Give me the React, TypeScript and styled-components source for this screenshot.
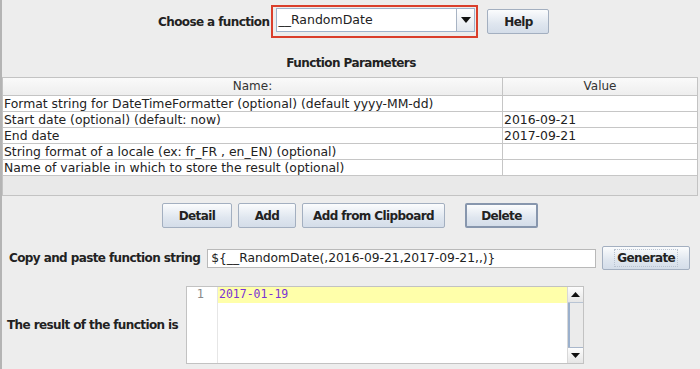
import React from 'react';
import styled, {createGlobalStyle} from 'styled-components';

const GlobalStyle = createGlobalStyle`
    html, body {
        margin: 0;
        padding: 0;
        background: #ededed;
    }
    * {
        box-sizing: border-box;
    }
`;

const params = [
    {name: "Format string for DateTimeFormatter (optional) (default yyyy-MM-dd)", value: ""},
    {name: "Start date (optional) (default: now)", value: "2016-09-21"},
    {name: "End date", value: "2017-09-21"},
    {name: "String format of a locale (ex: fr_FR , en_EN) (optional)", value: ""},
    {name: "Name of variable in which to store the result (optional)", value: ""},
];

export default function App() {
    return (
        <>
            <GlobalStyle/>
            <Window>
                <ChooseRow>
                    <BoldLabel>Choose a function</BoldLabel>
                    <FocusRing>
                        <Combo>
                            <ComboText>__RandomDate</ComboText>
                            <ComboArrow>
                                <svg width="10" height="6" viewBox="0 0 10 6"><path d="M0 0 L10 0 L5 6 Z" fill="#111"/></svg>
                            </ComboArrow>
                        </Combo>
                    </FocusRing>
                    <Button $width={62} $margin={9}>Help</Button>
                </ChooseRow>

                <Title>Function Parameters</Title>

                <TablePane>
                    <HeaderRow>
                        <HeaderCell $width={500}>Name:</HeaderCell>
                        <HeaderCell>Value</HeaderCell>
                    </HeaderRow>
                    {params.map((p) => (
                        <Row key={p.name}>
                            <Cell $width={500}>{p.name}</Cell>
                            <Cell>{p.value}</Cell>
                        </Row>
                    ))}
                    <EmptyArea/>
                </TablePane>

                <ButtonRow>
                    <Button $width={70}>Detail</Button>
                    <Button $width={58} $margin={6}>Add</Button>
                    <Button $width={143} $margin={6}>Add from Clipboard</Button>
                    <Button $width={73} $margin={20} $focused>Delete</Button>
                </ButtonRow>

                <CopyRow>
                    <BoldLabel>Copy and paste function string</BoldLabel>
                    <TextField>{"${__RandomDate(,2016-09-21,2017-09-21,,)}"}</TextField>
                    <Button $width={88} $height={24} $margin={6}>
                        <FocusText>Generate</FocusText>
                    </Button>
                </CopyRow>

                <ResultRow>
                    <ResultLabel>The result of the function is</ResultLabel>
                    <Editor>
                        <Gutter>1</Gutter>
                        <EditorBody>
                            <CurrentLine>2017-01-19</CurrentLine>
                        </EditorBody>
                        <ScrollBar>
                            <ScrollButton>
                                <svg width="9" height="5" viewBox="0 0 9 5"><path d="M0 5 L9 5 L4.5 0 Z" fill="#111"/></svg>
                            </ScrollButton>
                            <ScrollTrack/>
                            <ScrollButton>
                                <svg width="9" height="5" viewBox="0 0 9 5"><path d="M0 0 L9 0 L4.5 5 Z" fill="#111"/></svg>
                            </ScrollButton>
                        </ScrollBar>
                    </Editor>
                </ResultRow>
            </Window>
        </>
    );
}

const font = `"DejaVu Sans", "Liberation Sans", sans-serif`;

// bold labels: DejaVu is wider than the original Lucida, so tighten it a bit
const boldText = `
    font-weight: bold;
    font-size: 12px;
    letter-spacing: -0.6px;
    color: #222;
    white-space: nowrap;
`;

const Window = styled.div`
    width: 700px;
    height: 369px;
    background: #ededed;
    border-left: 2px solid #b4b4b4;
    font-family: ${font};
    font-size: 12.4px;
    color: #222;
    display: flex;
    flex-direction: column;
    overflow: hidden;
`;

const ChooseRow = styled.div`
    display: flex;
    align-items: center;
    padding-left: 156px;
    padding-top: 5px;
    height: 38px;
`;

const BoldLabel = styled.span`
    ${boldText}
`;

const FocusRing = styled.div`
    margin-left: 2px;
    width: 207px;
    height: 33px;
    border: 2px solid #da3f2c;
    padding: 1px 1px 0 3px;
`;

const Combo = styled.div`
    display: flex;
    height: 24px;
    border: 1px solid #9fb3cc;
    background: #fff;
`;

const ComboText = styled.div`
    flex: 1;
    padding-left: 1px;
    line-height: 22px;
    font-size: 12.5px;
`;

const ComboArrow = styled.div`
    width: 18px;
    border-left: 1px solid #a8b4c4;
    background: linear-gradient(#ffffff, #e3e8ef);
    display: flex;
    align-items: center;
    justify-content: center;
`;

const Button = styled.div<{ $width: number; $height?: number; $margin?: number; $focused?: boolean }>`
    ${boldText}
    width: ${p => p.$width}px;
    height: ${p => p.$height ?? 25}px;
    margin-left: ${p => p.$margin ?? 0}px;
    display: flex;
    align-items: center;
    justify-content: center;
    border: ${p => p.$focused ? "2px solid #8796ad" : "1px solid #a3afc0"};
    border-radius: 2px;
    background: linear-gradient(#fbfcfd, #dfe6ef 60%, #d4dde9);
`;

const FocusText = styled.span`
    padding: 1px 2px;
    border: 1px dotted #b8c2d0;
`;

const Title = styled.div`
    ${boldText}
    text-align: center;
    margin-top: 18px;
    height: 21px;
`;

const TablePane = styled.div`
    width: 696px;
    height: 119px;
    border: 1px solid #c3c3c3;
    background: #e9e9e9;
    display: flex;
    flex-direction: column;
`;

const HeaderRow = styled.div`
    display: flex;
    height: 18px;
    background: linear-gradient(#fafafa, #eeeeee);
    border-bottom: 1px solid #c4c4c4;
`;

const HeaderCell = styled.div<{ $width?: number }>`
    ${p => p.$width ? `width: ${p.$width}px; border-right: 1px solid #c4c4c4;` : "flex: 1;"}
    text-align: center;
    line-height: 17px;
    font-size: 12px;
    color: #333;
`;

const Row = styled.div`
    display: flex;
    height: 16px;
    background: #fff;
    border-bottom: 1px solid #c6c6c6;
`;

const Cell = styled.div<{ $width?: number }>`
    ${p => p.$width ? `width: ${p.$width}px; border-right: 1px solid #c6c6c6;` : "flex: 1;"}
    padding-left: 1px;
    line-height: 15px;
    white-space: nowrap;
    overflow: hidden;
    color: #222;
`;

const EmptyArea = styled.div`
    flex: 1;
`;

const ButtonRow = styled.div`
    display: flex;
    padding-left: 160px;
    margin-top: 7px;
`;

const CopyRow = styled.div`
    display: flex;
    align-items: center;
    padding-left: 7px;
    margin-top: 18px;
`;

const TextField = styled.div`
    margin-left: 7px;
    width: 389px;
    height: 19px;
    border: 1px solid #b9b9b9;
    background: #fff;
    padding-left: 3px;
    line-height: 17px;
    font-size: 12.3px;
    white-space: nowrap;
`;

const ResultRow = styled.div`
    display: flex;
    align-items: center;
    padding-left: 5px;
    margin-top: 16px;
`;

const ResultLabel = styled(BoldLabel)`
    width: 179px;
`;

const Editor = styled.div`
    display: flex;
    width: 398px;
    height: 78px;
    border: 1px solid #c2c2c2;
    background: #fff;
`;

const Gutter = styled.div`
    width: 31px;
    border-right: 1px solid #e6e6e6;
    text-align: right;
    padding-right: 13px;
    font-family: "DejaVu Sans Mono", monospace;
    font-size: 12px;
    color: #8a8a8a;
    line-height: 15px;
`;

const EditorBody = styled.div`
    flex: 1;
`;

const CurrentLine = styled.div`
    height: 16px;
    background: #ffffaa;
    padding-left: 1px;
    font-family: "DejaVu Sans Mono", monospace;
    font-size: 11.5px;
    line-height: 15px;
    color: #7a33d6;
`;

const ScrollBar = styled.div`
    width: 16px;
    display: flex;
    flex-direction: column;
    background: #ececec;
    border-left: 1px solid #d8d8d8;
`;

const ScrollButton = styled.div`
    height: 16px;
    display: flex;
    align-items: center;
    justify-content: center;
    background: linear-gradient(#fdfdfd, #e6e6e6);
    border-bottom: 1px solid #b8c4d4;
    &:last-child {
        border-bottom: none;
        border-top: 1px solid #a9b7cb;
    }
`;

const ScrollTrack = styled.div`
    flex: 1;
    border-left: 2px solid #9bb0cc;
    background: #ebebeb;
`;
